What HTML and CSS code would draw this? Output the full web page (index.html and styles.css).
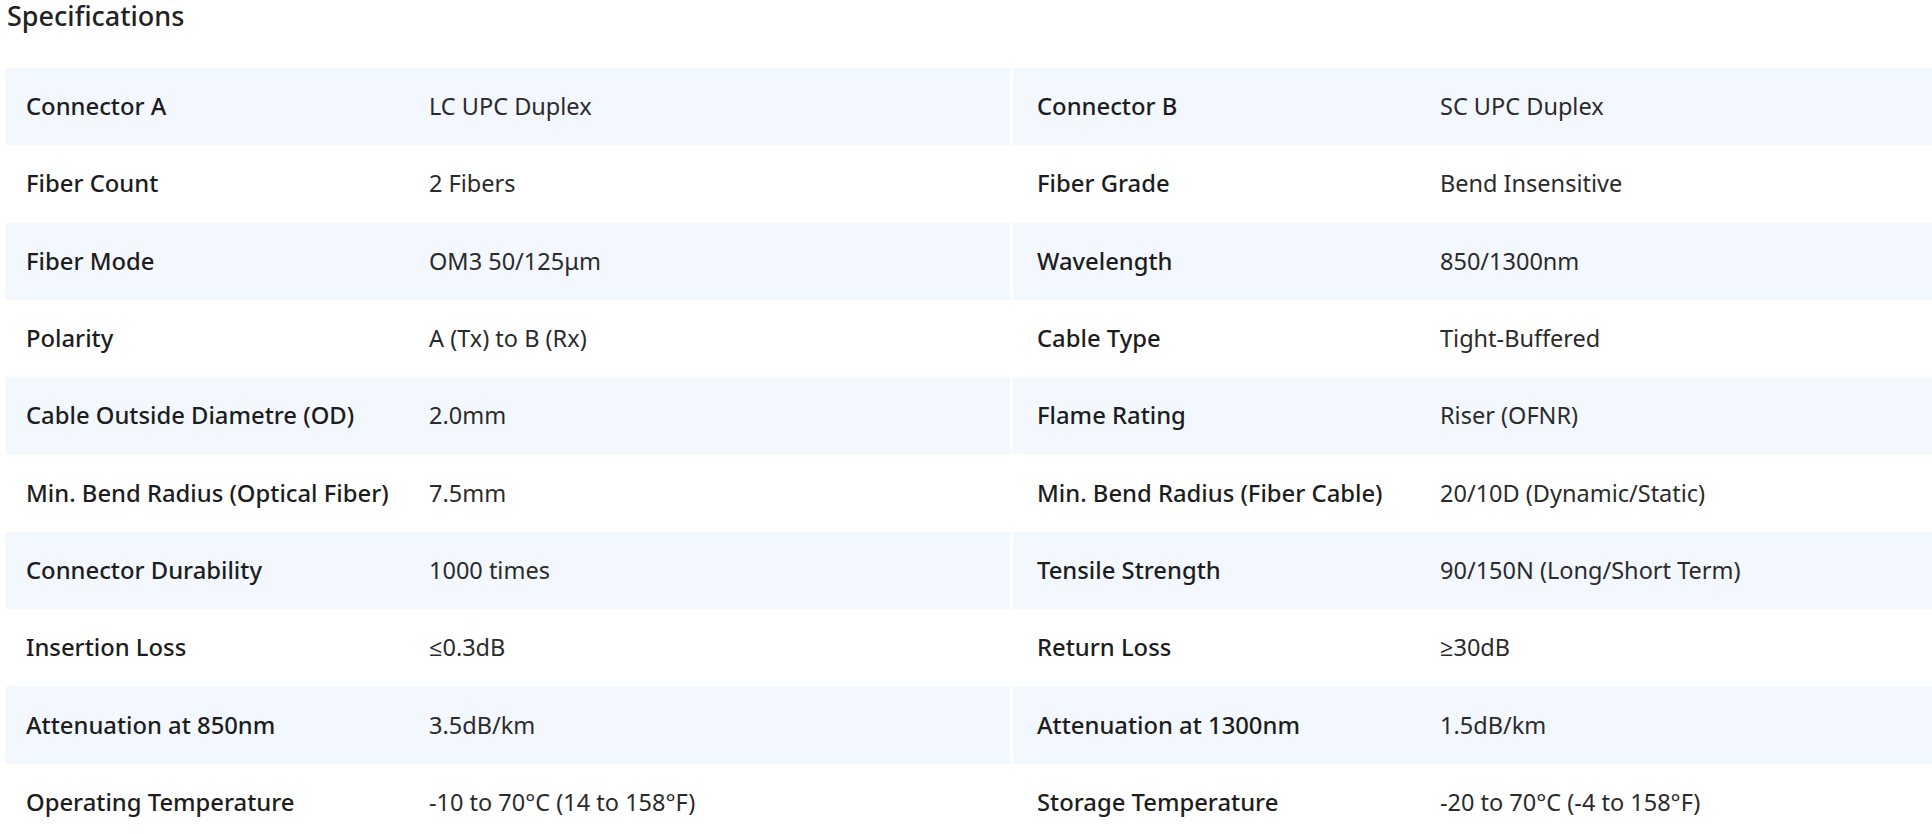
FILE: index.html
```html
<!DOCTYPE html>
<html lang="en">
<head>
<meta charset="utf-8">
<title>Specifications</title>
<link rel="stylesheet" href="styles.css">
</head>
<body>
<section class="specs">
  <h2 class="specs-title">Specifications</h2>
  <div class="specs-grid">
    <div class="spec-col">
      <div class="spec-row"><div class="spec-label">Connector A</div><div class="spec-value">LC UPC Duplex</div></div>
      <div class="spec-row"><div class="spec-label">Fiber Count</div><div class="spec-value">2 Fibers</div></div>
      <div class="spec-row"><div class="spec-label">Fiber Mode</div><div class="spec-value">OM3 50/125μm</div></div>
      <div class="spec-row"><div class="spec-label">Polarity</div><div class="spec-value">A (Tx) to B (Rx)</div></div>
      <div class="spec-row"><div class="spec-label">Cable Outside Diametre (OD)</div><div class="spec-value">2.0mm</div></div>
      <div class="spec-row"><div class="spec-label">Min. Bend Radius (Optical Fiber)</div><div class="spec-value">7.5mm</div></div>
      <div class="spec-row"><div class="spec-label">Connector Durability</div><div class="spec-value">1000 times</div></div>
      <div class="spec-row"><div class="spec-label">Insertion Loss</div><div class="spec-value">≤0.3dB</div></div>
      <div class="spec-row"><div class="spec-label">Attenuation at 850nm</div><div class="spec-value">3.5dB/km</div></div>
      <div class="spec-row"><div class="spec-label">Operating Temperature</div><div class="spec-value">-10 to 70°C (14 to 158°F)</div></div>
    </div>
    <div class="spec-col">
      <div class="spec-row"><div class="spec-label">Connector B</div><div class="spec-value">SC UPC Duplex</div></div>
      <div class="spec-row"><div class="spec-label">Fiber Grade</div><div class="spec-value">Bend Insensitive</div></div>
      <div class="spec-row"><div class="spec-label">Wavelength</div><div class="spec-value">850/1300nm</div></div>
      <div class="spec-row"><div class="spec-label">Cable Type</div><div class="spec-value">Tight-Buffered</div></div>
      <div class="spec-row"><div class="spec-label">Flame Rating</div><div class="spec-value">Riser (OFNR)</div></div>
      <div class="spec-row"><div class="spec-label">Min. Bend Radius (Fiber Cable)</div><div class="spec-value">20/10D (Dynamic/Static)</div></div>
      <div class="spec-row"><div class="spec-label">Tensile Strength</div><div class="spec-value">90/150N (Long/Short Term)</div></div>
      <div class="spec-row"><div class="spec-label">Return Loss</div><div class="spec-value">≥30dB</div></div>
      <div class="spec-row"><div class="spec-label">Attenuation at 1300nm</div><div class="spec-value">1.5dB/km</div></div>
      <div class="spec-row"><div class="spec-label">Storage Temperature</div><div class="spec-value">-20 to 70°C (-4 to 158°F)</div></div>
    </div>
  </div>
</section>
</body>
</html>
```
FILE: styles.css
```css
html, body {
  margin: 0;
  padding: 0;
  background: #ffffff;
}
body {
  font-family: "Noto Sans", "Open Sans", "Liberation Sans", sans-serif;
  color: #1f1f1f;
  overflow: hidden;
}
.specs {
  padding: 0 0 0 6px;
}
.specs-title {
  margin: 0 0 37px 1px;
  padding-top: 1px;
  font-size: 27px;
  line-height: 30px;
  font-weight: 500;
  color: #222222;
}
.specs-grid {
  display: grid;
  grid-template-columns: 1004px 1fr;
  column-gap: 3px;
}
.spec-col {
  display: flex;
  flex-direction: column;
}
.spec-row {
  display: grid;
  grid-template-columns: 403px 1fr;
  align-items: center;
  height: 77.3px;
  padding-left: 20px;
  padding-bottom: 1px;
  box-sizing: border-box;
}
.spec-col + .spec-col .spec-row {
  padding-left: 24px;
}
.spec-row:nth-child(odd) {
  background: #f3f7fe;
}
.spec-label {
  font-size: 23.8px;
  font-weight: 500;
  color: #1d1d1d;
  white-space: nowrap;
}
.spec-value {
  font-size: 23.5px;
  font-weight: 400;
  color: #2b2b2b;
  white-space: nowrap;
}
```
